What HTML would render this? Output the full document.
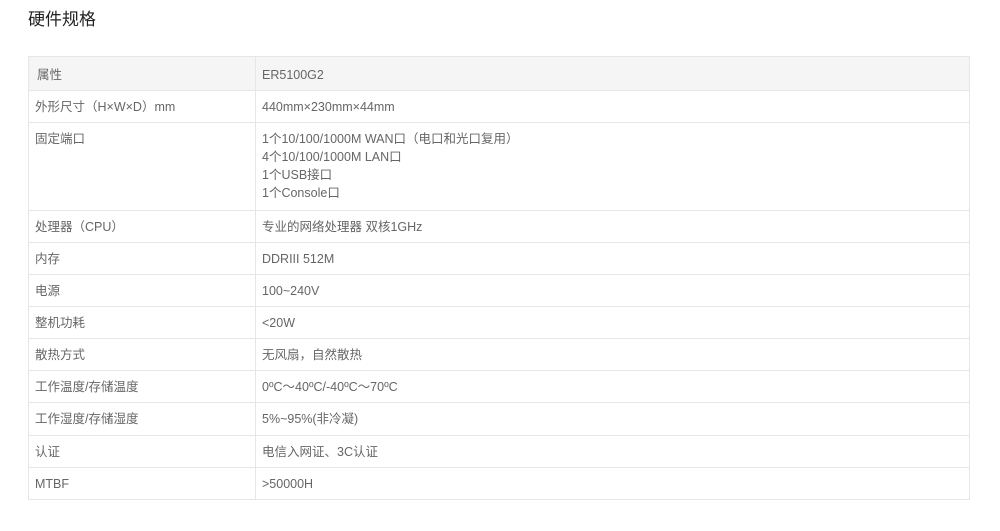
<!DOCTYPE html>
<html><head><meta charset="utf-8"><style>
body{margin:0;background:#fff;font-family:"Liberation Sans","Noto Sans CJK SC",sans-serif;}
h1{position:absolute;left:28px;top:5px;margin:0;font-size:17px;font-weight:normal;color:#222;}
table{position:absolute;left:28px;top:56px;width:942px;border-collapse:collapse;table-layout:fixed;font-size:12.5px;color:#666;}
td{border:1px solid #e6e6e6;padding:0 6px;vertical-align:top;line-height:18px;}
tr td{height:32px;padding-top:7px;box-sizing:border-box;}
tr.h td{background:#f5f5f5;height:34px;padding-top:9px;}
tr.h td:first-child{padding-left:8px;}
</style></head><body>
<h1>硬件规格</h1>
<table>
<colgroup><col style="width:227px"><col></colgroup>
<tr class="h"><td>属性</td><td>ER5100G2</td></tr>
<tr><td>外形尺寸（H×W×D）mm</td><td>440mm×230mm×44mm</td></tr>
<tr><td style="height:88px">固定端口</td><td>1个10/100/1000M WAN口（电口和光口复用）<br>4个10/100/1000M LAN口<br>1个USB接口<br>1个Console口</td></tr>
<tr><td>处理器（CPU）</td><td>专业的网络处理器 双核1GHz</td></tr>
<tr><td>内存</td><td>DDRIII 512M</td></tr>
<tr><td>电源</td><td>100~240V</td></tr>
<tr><td>整机功耗</td><td>&lt;20W</td></tr>
<tr><td>散热方式</td><td>无风扇，自然散热</td></tr>
<tr><td>工作温度/存储温度</td><td>0ºC～40ºC/-40ºC～70ºC</td></tr>
<tr><td style="height:33px">工作湿度/存储湿度</td><td>5%~95%(非冷凝)</td></tr>
<tr><td>认证</td><td>电信入网证、3C认证</td></tr>
<tr><td>MTBF</td><td>&gt;50000H</td></tr>
</table>
</body></html>
